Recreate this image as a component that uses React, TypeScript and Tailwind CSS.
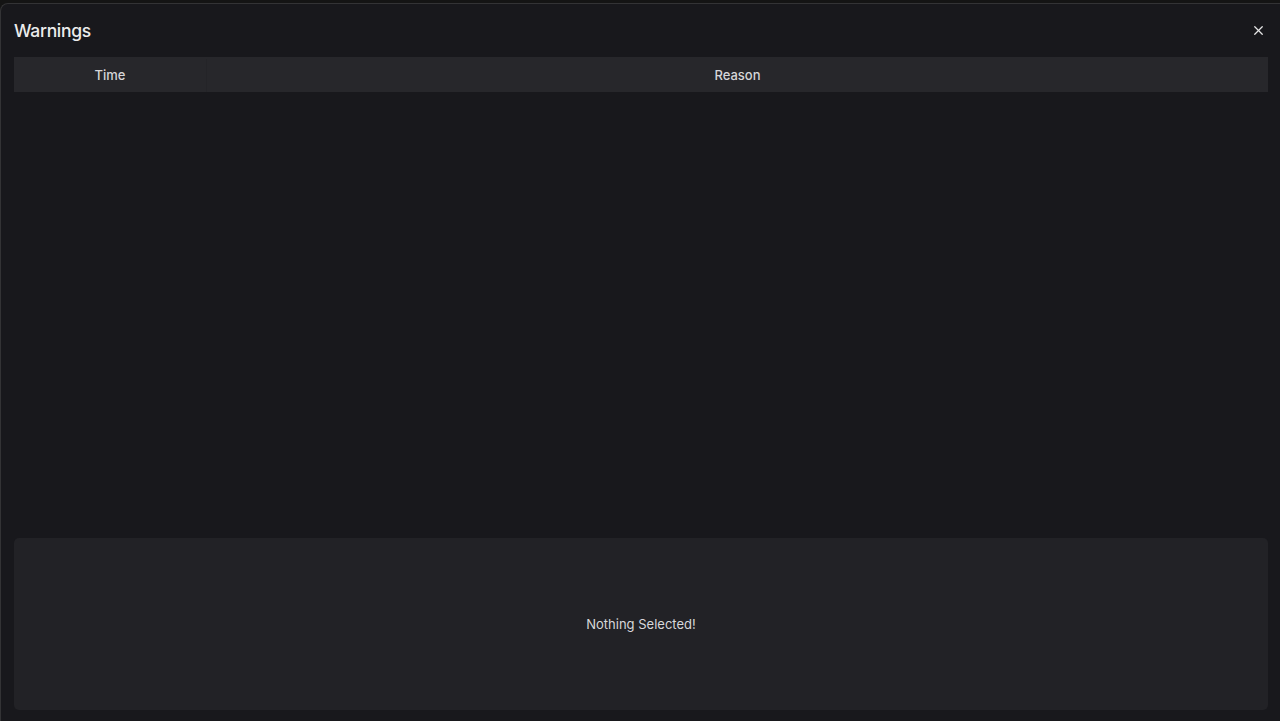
import { X } from "lucide-react";

const font = { fontFamily: "Inter, 'Noto Sans', sans-serif" };

function WarningsHeader({ onClose }: { onClose?: () => void }) {
  return (
    <div className="flex h-[53px] shrink-0 items-center justify-between pl-[13px] pr-[12px]">
      <h1 className="mt-[1px] text-[17.5px] font-medium tracking-[-0.3px] text-[#ececec]">Warnings</h1>
      <button
        type="button"
        onClick={onClose}
        aria-label="Close"
        className="flex h-5 w-5 items-center justify-center text-[#e6e6e6]"
      >
        <X size={15} strokeWidth={2} />
      </button>
    </div>
  );
}

function WarningsTable() {
  return (
    <div className="flex min-h-0 flex-1 flex-col pl-[13px] pr-[12px]">
      <div className="grid h-[35px] shrink-0 grid-cols-[193px_1fr] bg-[#27272b] pt-[2px] text-[13px] font-medium text-[#d6d6d8]">
        <div className="flex items-center justify-center border-r border-[#242428]">Time</div>
        <div className="flex items-center justify-center">Reason</div>
      </div>
      <div className="flex-1" />
    </div>
  );
}

function DetailPanel() {
  return (
    <div className="mb-[11px] ml-[13px] mr-[12px] mt-[11px] flex h-[172px] shrink-0 items-center justify-center rounded-[5px] bg-[#222226] pt-[2px] text-[13px] text-[#d8d8da]">
      Nothing Selected!
    </div>
  );
}

export default function App() {
  return (
    <div className="h-[721px] w-full overflow-hidden bg-[#141414] pt-[3px]" style={font}>
      <div className="flex h-full flex-col rounded-tl-[8px] border-l border-t border-[#333335] bg-[#18181c]">
        <WarningsHeader />
        <WarningsTable />
        <DetailPanel />
      </div>
    </div>
  );
}
